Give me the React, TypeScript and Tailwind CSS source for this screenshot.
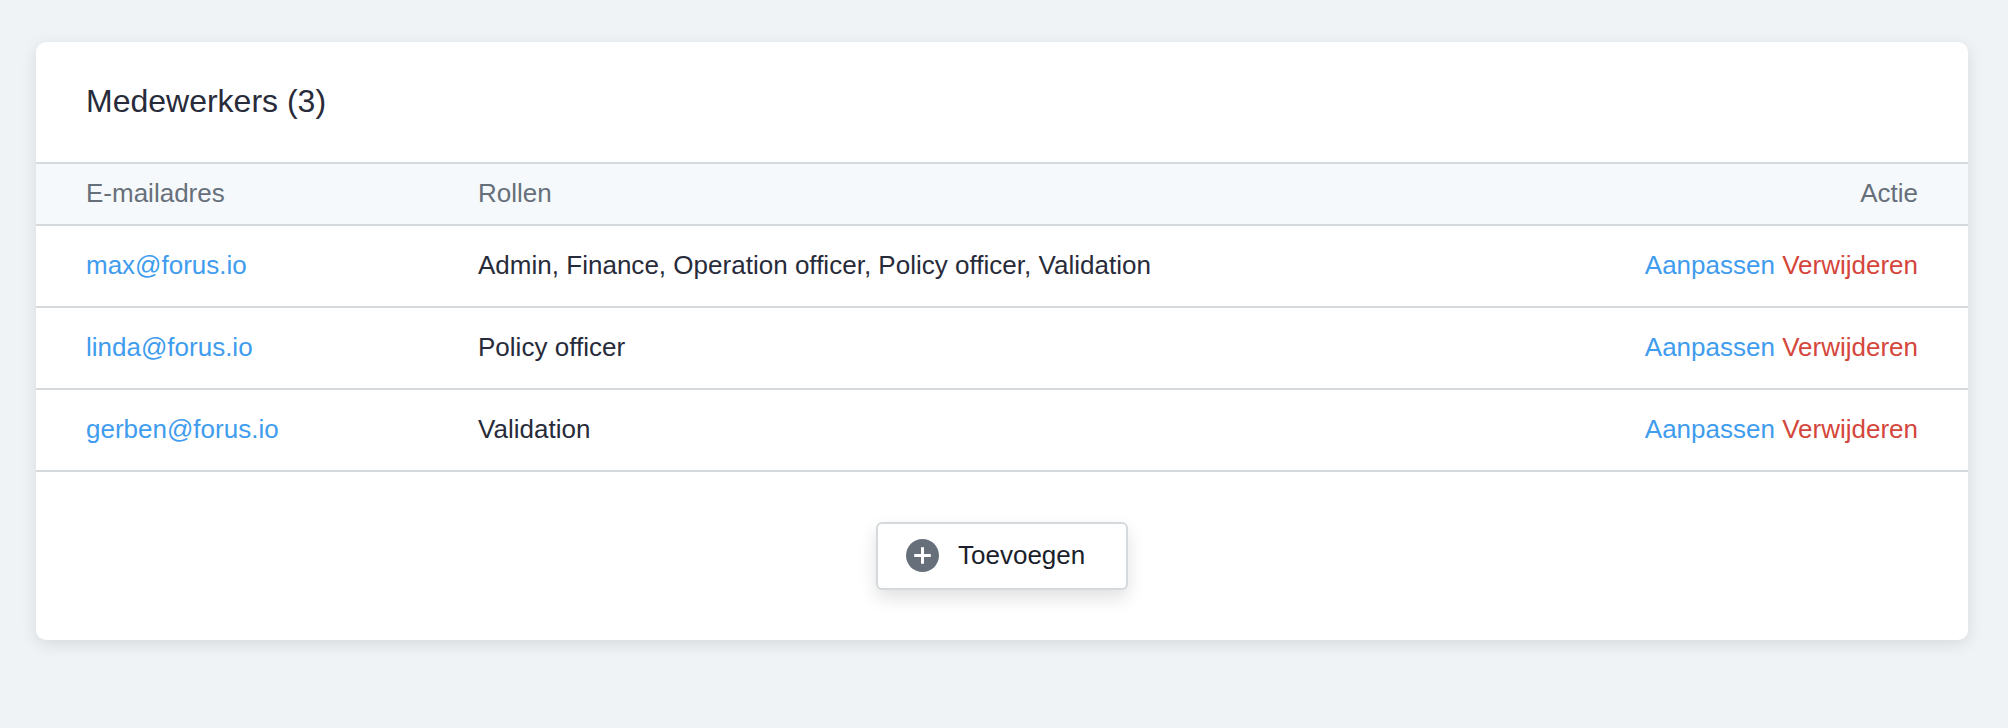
const rows = [
  { email: 'max@forus.io', roles: 'Admin, Finance, Operation officer, Policy officer, Validation' },
  { email: 'linda@forus.io', roles: 'Policy officer' },
  { email: 'gerben@forus.io', roles: 'Validation' },
];

export default function App() {
  return (
    <div className="h-[728px] bg-[#eff3f6] pl-[36px] pr-[40px] pt-[42px] font-['Liberation_Sans',sans-serif] text-[26px] leading-[30px] text-[#282b3a]">
      <main className="h-[598px] rounded-[10px] bg-white shadow-[0_4px_16px_rgba(0,0,0,0.1)]">
        <h1 className="flex h-[120px] items-center px-[50px] pb-[2px] text-[32px]">Medewerkers (3)</h1>
        <div className="flex h-[64px] items-center border-y-2 border-[#d4d9dd] bg-[#f5f9fc] px-[50px] pb-[2px] text-[#67707a]">
          <span className="w-[392px]">E-mailadres</span>
          <span className="flex-1">Rollen</span>
          <span>Actie</span>
        </div>
        {rows.map((r) => (
          <div key={r.email} className="flex h-[82px] items-center border-b-2 border-[#d4d9dd] px-[50px] pb-[2px]">
            <span className="w-[392px] text-[#409cee]">{r.email}</span>
            <span className="flex-1 tracking-[0.015px]">{r.roles}</span>
            <span className="text-[#409cee]">Aanpassen <span className="text-[#d4463c]">Verwijderen</span></span>
          </div>
        ))}
        <div className="flex justify-center pt-[50px]">
          <button className="flex h-[68px] w-[252px] items-center rounded-[6px] border-2 border-[#d4d9dd] bg-white pb-px pl-[28px] text-[#1b1e2b] shadow-[0_8px_18px_rgba(0,0,0,0.12)]">
            <svg className="mr-[19px] size-[33px]" viewBox="0 0 33 33" aria-hidden="true">
              <circle cx="16.5" cy="16.5" r="16.5" fill="#67707a" />
              <path d="M16.5 8.2v16.6M8.2 16.5h16.6" stroke="#fff" strokeWidth="3" />
            </svg>
            <span className="pb-px">Toevoegen</span>
          </button>
        </div>
      </main>
    </div>
  );
}
